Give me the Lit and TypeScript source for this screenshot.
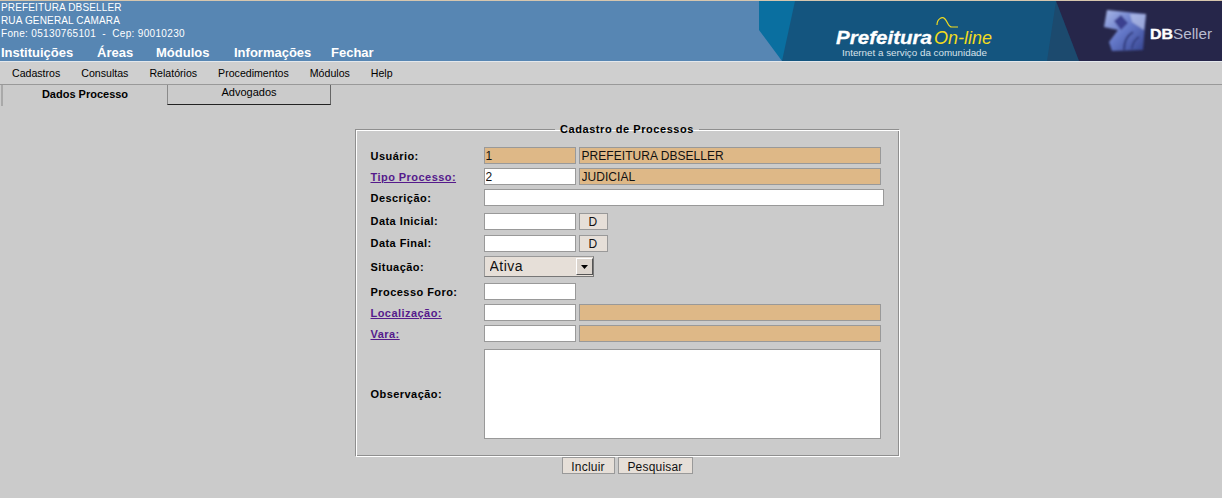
import { LitElement, css, html } from "lit";
import { customElement } from "lit/decorators.js";

const topMenu = ["Instituições", "Áreas", "Módulos", "Informações", "Fechar"];
const subMenu = ["Cadastros", "Consultas", "Relatórios", "Procedimentos", "Módulos", "Help"];

@customElement("app-root")
export class AppRoot extends LitElement {
  static styles = css`
    :host {
      display: block;
      height: 498px;
      overflow: hidden;
      background: #cbcbcb;
      font-family: "Liberation Sans", Arial, sans-serif;
      color: #000;
    }
    .header {
      display: flex;
      justify-content: space-between;
      height: 60px;
      background: #5786b3;
      border-top: 1px solid #d6c6ae;
      border-bottom: 1px solid #e4e8ec;
      color: #fff;
    }
    .info {
      display: flex;
      flex-direction: column;
      padding-left: 1px;
    }
    .info p {
      margin: 0;
      font-size: 10px;
      line-height: 13px;
      letter-spacing: 0.15px;
      white-space: pre;
    }
    .info p.wide {
      letter-spacing: 0.33px;
    }
    .top-menu {
      display: grid;
      grid-template-columns: 96px 59px 78px 97px auto;
      margin-top: 6px;
      font-size: 13px;
      line-height: 14px;
      font-weight: bold;
    }
    .banner {
      display: block;
      width: 463px;
      height: 60px;
    }
    .sub-menu {
      display: flex;
      gap: 21px;
      height: 22px;
      padding-left: 12px;
      align-items: center;
      background: #cfcfcf;
      border-bottom: 1px solid #999;
      font-size: 10.6px;
    }
    .tabs {
      display: flex;
      height: 21px;
      padding-left: 1px;
    }
    .tab {
      box-sizing: border-box;
      font-size: 11px;
      text-align: center;
    }
    .tab.active {
      width: 166px;
      border-left: 2px solid #a9a9a9;
      padding-top: 3px;
      font-weight: bold;
    }
    .tab.other {
      width: 164px;
      height: 20px;
      border-left: 1px solid #8a8a8a;
      border-right: 1px solid #666;
      border-bottom: 1px solid #222;
      padding-top: 1px;
    }
    .content {
      display: flex;
      flex-direction: column;
      align-items: center;
      padding-top: 18px;
      padding-left: 32px;
    }
    fieldset {
      box-sizing: border-box;
      width: 545px;
      height: 333px;
      margin: 0;
      padding: 0 14px 0 14px;
      border: 1px solid;
      border-color: #8f8f8f #fff #fff #8f8f8f;
      box-shadow: inset 1px 1px 0 #fff, inset -1px -1px 0 #8f8f8f;
    }
    legend {
      margin: 0 auto;
      padding: 0 5px;
      font-size: 11px;
      font-weight: bold;
      letter-spacing: 0.55px;
      line-height: 11px;
    }
    .grid {
      display: grid;
      grid-template-columns: 114px auto;
      grid-template-rows: 21px 21px 24px 22px 21px 27px 21px 21px 24px 90px;
      margin-top: 12px;
    }
    label,
    .link {
      padding-left: 1px;
      font-size: 11px;
      font-weight: bold;
      letter-spacing: 0.45px;
      line-height: 17px;
    }
    .link {
      color: #551a8b;
      text-decoration: underline;
    }
    .low {
      padding-top: 1px;
    }
    .area-label {
      align-self: center;
    }
    .fields {
      display: flex;
      gap: 3px;
      align-items: flex-start;
    }
    input,
    textarea {
      box-sizing: border-box;
      height: 17px;
      margin: 0;
      padding: 0 1px;
      border: 1px solid #999;
      border-radius: 0;
      background: #fff;
      color: #111;
      font: 12px "Liberation Sans", Arial, sans-serif;
      letter-spacing: 0.05px;
      outline: none;
    }
    .code {
      width: 92px;
    }
    .name {
      width: 302px;
      padding-left: 2px;
    }
    .full {
      width: 400px;
    }
    .locked {
      background: #deb887;
    }
    textarea {
      display: block;
      width: 397px;
      height: 90px;
      resize: none;
    }
    button {
      box-sizing: border-box;
      height: 17px;
      margin: 0;
      padding: 0;
      border: 1px solid #999;
      border-radius: 0;
      background: #e6dfd8;
      color: #111;
      font: 12px "Liberation Sans", Arial, sans-serif;
      letter-spacing: 0.2px;
    }
    .date-btn {
      width: 29px;
    }
    .select {
      position: relative;
      width: 110px;
      height: 21px;
    }
    select {
      box-sizing: border-box;
      display: block;
      width: 100%;
      height: 100%;
      margin: 0;
      padding: 0 0 2px 5px;
      appearance: none;
      border: 1px solid #999;
      border-right-color: #777;
      border-bottom-color: #777;
      border-radius: 0;
      background: #e6dfd8;
      color: #111;
      font: 14px "Liberation Sans", Arial, sans-serif;
      letter-spacing: 0.5px;
      outline: none;
    }
    .arrow {
      position: absolute;
      top: 2px;
      right: 1px;
      display: flex;
      align-items: center;
      justify-content: center;
      box-sizing: border-box;
      width: 17px;
      height: 17px;
      background: #dcd5ce;
      border: 1px solid;
      border-color: #fff #555 #555 #fff;
    }
    .actions {
      display: flex;
      gap: 3px;
    }
    .actions button {
      padding-top: 2px;
    }
    .include {
      width: 53px;
    }
    .search {
      width: 75px;
    }
  `;

  banner() {
    return html`<svg class="banner" viewBox="759 1 463 60" role="img" aria-label="Prefeitura On-line, DBSeller">
      <defs>
        <linearGradient id="cube" x1="0" y1="0" x2="1" y2="1">
          <stop offset="0" stop-color="#a9b8e8" />
          <stop offset="0.5" stop-color="#6478c8" />
          <stop offset="1" stop-color="#34438f" />
        </linearGradient>
        <filter id="soft"><feGaussianBlur stdDeviation="0.8" /></filter>
      </defs>
      <rect x="759" y="1" width="463" height="60" fill="#14557f" />
      <polygon points="759,1 795,1 782,61 759,61" fill="#0a6fa0" />
      <polygon points="759,1 759,30 782,61 759,61" fill="#5786b3" />
      <polygon points="1056,1 1047,61 1079,61" fill="#1c4a6e" />
      <polygon points="1056,1 1222,1 1222,61 1079,61" fill="#26264a" />

      <text x="836" y="44" font-family="Liberation Sans" font-size="18" font-weight="bold" font-style="italic" fill="#fff" stroke="#fff" stroke-width="0.3" textLength="96" lengthAdjust="spacingAndGlyphs">Prefeitura</text>
      <text x="934" y="44" font-family="Liberation Sans" font-size="19" font-style="italic" fill="#f2dc1e" textLength="58" lengthAdjust="spacingAndGlyphs">On-line</text>
      <path d="M937 25c0-6 5-9 8-6s3 8 7 8h6" fill="none" stroke="#f2dc1e" stroke-width="1.2" />
      <text x="842" y="56" font-family="Liberation Sans" font-size="9" fill="#d8e2ea" textLength="145" lengthAdjust="spacingAndGlyphs">Internet a serviço da comunidade</text>

      <g filter="url(#soft)">
        <polygon points="1107,10 1146,14 1143,50 1112,51 1109,42 1118,30 1104,27" fill="url(#cube)" />
        <polygon points="1114,21 1121,15 1128,23 1121,30" fill="#3a3f8f" />
        <polygon points="1130,14 1146,14 1144,30 1132,22" fill="#c9d2f0" opacity="0.6" />
        <path d="M1124 50c0-9 4-15 9-18" fill="none" stroke="#2e3778" stroke-width="2" />
        <path d="M1132 49c0-5 3-10 7-12" fill="none" stroke="#2e3778" stroke-width="1.5" />
      </g>
      <text x="1150" y="39" font-family="Liberation Sans" font-size="15" font-weight="bold" fill="#fff" textLength="23" lengthAdjust="spacingAndGlyphs" stroke="#fff" stroke-width="0.4">DB</text>
      <text x="1173" y="39" font-family="Liberation Sans" font-size="15" fill="#b9bccf" textLength="39" lengthAdjust="spacingAndGlyphs">Seller</text>
    </svg>`;
  }

  render() {
    return html`
      <header class="header">
        <div class="info">
          <p>PREFEITURA DBSELLER</p>
          <p>RUA GENERAL CAMARA</p>
          <p class="wide">Fone: 05130765101  -  Cep: 90010230</p>
          <nav class="top-menu">${topMenu.map((m) => html`<span>${m}</span>`)}</nav>
        </div>
        ${this.banner()}
      </header>
      <nav class="sub-menu">${subMenu.map((m) => html`<span>${m}</span>`)}</nav>
      <div class="tabs">
        <div class="tab active">Dados Processo</div>
        <div class="tab other">Advogados</div>
      </div>
      <main class="content">
        <fieldset>
          <legend>Cadastro de Processos</legend>
          <div class="grid">
            <label class="low">Usuário:</label>
            <div class="fields">
              <input class="code locked" .value=${"1"} />
              <input class="name locked" .value=${"PREFEITURA DBSELLER"} />
            </div>
            <a class="link low">Tipo Processo:</a>
            <div class="fields">
              <input class="code" .value=${"2"} />
              <input class="name locked" .value=${"JUDICIAL"} />
            </div>
            <label class="low">Descrição:</label>
            <div class="fields"><input class="full" /></div>
            <label>Data Inicial:</label>
            <div class="fields"><input class="code" /><button class="date-btn">D</button></div>
            <label>Data Final:</label>
            <div class="fields"><input class="code" /><button class="date-btn">D</button></div>
            <label class="low" style="line-height:21px">Situação:</label>
            <div class="fields">
              <div class="select">
                <select><option>Ativa</option></select>
                <span class="arrow">
                  <svg width="7" height="4" viewBox="0 0 7 4"><polygon points="0,0 7,0 3.5,4" fill="#000" /></svg>
                </span>
              </div>
            </div>
            <label class="low">Processo Foro:</label>
            <div class="fields"><input class="code" /></div>
            <a class="link low">Localização:</a>
            <div class="fields"><input class="code" /><input class="name locked" /></div>
            <a class="link low">Vara:</a>
            <div class="fields"><input class="code" /><input class="name locked" /></div>
            <label class="area-label">Observação:</label>
            <div><textarea></textarea></div>
          </div>
        </fieldset>
        <div class="actions">
          <button class="include">Incluir</button>
          <button class="search">Pesquisar</button>
        </div>
      </main>
    `;
  }
}
